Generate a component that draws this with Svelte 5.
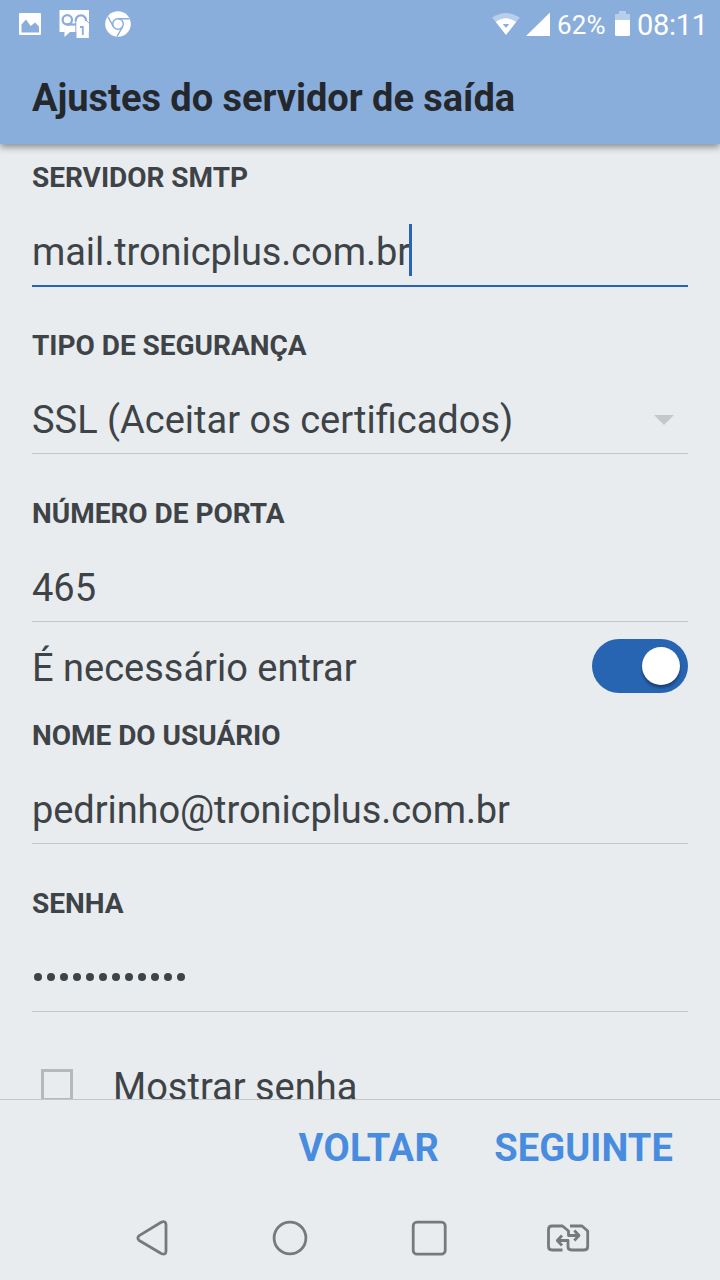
<script>
  const server = 'mail.tronicplus.com.br';
  const dots = Array(12).fill(0);
</script>

<div class="screen">
  <header>
    <div class="status">
      <svg class="notifications" width="150" height="48" viewBox="0 0 150 48">
        <path fill="#fff" fill-rule="evenodd" d="M20 13h20a1 1 0 0 1 1 1v20a1 1 0 0 1-1 1H20a1 1 0 0 1-1-1V14a1 1 0 0 1 1-1zM21.500 32.500H39V26.500L35 22.500L30.700 26L26 19.500L21.500 24.500z" />
        <path fill="#fff" d="M59.500 10H89V32H70L64.500 37V32H59.500z" />
        <g fill="none" stroke="#8aaedc" stroke-width="2.300">
          <circle cx="67.300" cy="19.800" r="4.700" />
          <path d="M67.300 24.500H76" />
          <path d="M75.800 21.500A5.200 5.200 0 1 1 86 21.500" />
        </g>
        <path fill="#fff" d="M76.300 21H86.500L88.800 23.500V38H76.300z" />
        <path fill="none" stroke="#8aaedc" stroke-width="1" d="M75.800 21V38M86.500 20.500L89.300 23.500" />
        <path fill="none" stroke="#8aaedc" stroke-width="1.800" d="M80 27H82.800V35" />
        <circle cx="118" cy="24" r="12.800" fill="#fff" />
        <g fill="none" stroke="#8aaedc" stroke-width="1.500">
          <circle cx="118" cy="24" r="5.300" />
          <path d="M118 18.700H129.500M113.400 26.600L108 17M122.600 26.600L117 36.500" />
        </g>
      </svg>
      <svg width="60" height="48" viewBox="0 0 60 48">
        <path fill="#b8cfeb" d="M2.200 17.500Q16 8.500 29.800 17.500L25.500 23H6.500z" />
        <path fill="#fff" fill-rule="evenodd" d="M5.800 22Q16 14.500 26.200 22L16 35zM12.800 24H19.200L16 28z" />
        <path fill="#fff" d="M60 12.500V36H36z" />
      </svg>
      <span class="percent">62%</span>
      <svg class="battery" width="16" height="48" viewBox="0 0 16 48">
        <path fill="#b8cfeb" d="M0 20V14H4V11H11V14H15V20z" />
        <path fill="#fff" d="M0 20H15V34.500Q15 36 13.500 36H1.500Q0 36 0 34.500z" />
      </svg>
      <span class="time">08:11</span>
    </div>
    <h1>Ajustes do servidor de saída</h1>
  </header>

  <main>
    <section class="field active">
      <div class="label">SERVIDOR SMTP</div>
      <div class="value"><span class="server">{server}</span><i class="caret"></i></div>
    </section>
    <section class="field">
      <div class="label">TIPO DE SEGURANÇA</div>
      <div class="value select">
        <span>SSL (Aceitar os certificados)</span>
        <svg width="20" height="10" viewBox="0 0 20 10"><path fill="#c5c8ca" d="M0 0H20L10 10z" /></svg>
      </div>
    </section>
    <section class="field">
      <div class="label">NÚMERO DE PORTA</div>
      <div class="value"><span>465</span></div>
    </section>
    <div class="login-row">
      <span>É necessário entrar</span>
      <div class="switch"><i></i></div>
    </div>
    <section class="field">
      <div class="label">NOME DO USUÁRIO</div>
      <div class="value"><span class="user">pedrinho@tronicplus.com.br</span></div>
    </section>
    <section class="field">
      <div class="label">SENHA</div>
      <div class="value password">{#each dots as _}<i></i>{/each}</div>
    </section>
    <div class="check-row">
      <i class="box"></i>
      <span>Mostrar senha</span>
    </div>
  </main>

  <footer>
    <span class="back">VOLTAR</span>
    <span>SEGUINTE</span>
  </footer>

  <nav>
    <svg width="720" height="84" viewBox="0 1196 720 84" fill="none" stroke="#777a7a" stroke-width="2.800" stroke-linejoin="round">
      <path d="M139.200 1235.600L161.200 1222.200Q166 1220.500 166 1225V1251Q166 1255.500 161.200 1253.500L139.200 1240.500Q136.500 1238 139.200 1235.600z" />
      <circle cx="290" cy="1238" r="15.900" />
      <rect x="413.200" y="1222.200" width="32" height="32" rx="3.800" />
      <path d="M562.500 1250H552Q548.500 1250 548.500 1246.500V1229.500Q548.500 1226 552 1226H562.500L568.500 1231V1235.500H578" />
      <path d="M574.300 1230.500L579 1235.500L574.300 1240.500" />
      <path d="M570 1226H582L587.700 1231V1246.500Q587.700 1250 584.200 1250H571.500Q568 1250 568 1246.500V1240.500H558" />
      <path d="M562 1235.500L557.300 1240.500L562 1245.500" />
    </svg>
  </nav>
</div>

<style>
  :global(body) { margin: 0; overflow: hidden; }
  .screen {
    width: 720px;
    height: 1280px;
    display: flex;
    flex-direction: column;
    overflow: hidden;
    background: #e8ecef;
    color: #3e4347;
    font: 38px/60px Roboto, sans-serif;
    white-space: nowrap;
  }
  svg { display: block; flex: none; }
  header {
    height: 144px;
    flex: none;
    background: #8aaedc;
    box-shadow: 0 3px 7px rgba(0, 0, 0, .42);
    z-index: 1;
  }
  .status { height: 48px; display: flex; color: #fff; }
  .notifications { margin-right: 340px; }
  .percent { width: 58px; margin: 0 0 0 7px; font-size: 26px; line-height: 50px; letter-spacing: .2px; }
  .battery { margin: 0 6px 0 0; }
  .time { font-size: 29px; line-height: 50px; letter-spacing: -.3px; }
  h1 {
    margin: 0;
    padding-left: 32px;
    color: #24282d;
    font-size: 38px;
    font-weight: 700;
    line-height: 100px;
    letter-spacing: -.03px;
  }
  main {
    height: 939px;
    flex: none;
    padding: 16px 32px 0;
    overflow: hidden;
  }
  .field { height: 126px; margin-bottom: 42px; display: flex; flex-direction: column; }
  .label { height: 34px; font-size: 28px; font-weight: 700; line-height: 36px; letter-spacing: -.02px; }
  .value {
    padding-top: 28px;
    box-sizing: border-box;
    flex: 1;
    display: flex;
    align-items: center;
    border-bottom: 1px solid #c1c6ca;
  }
  .value > span { height: 63px; line-height: 60px; }
  .value .server, .value .user { letter-spacing: -.07px; }
  .active { height: 127px; margin-bottom: 41px; }
  .active .value { border-bottom: 2px solid #2765b3; }
  .caret { width: 3px; height: 52px; margin: -7px 0 0 -1px; background: #2765b3; }
  .select { justify-content: space-between; }
  .select svg { margin: 0 14px 3px 0; }
  .login-row {
    height: 96px;
    margin-top: -42px;
    display: flex;
    justify-content: space-between;
    line-height: 92px;
  }
  .switch {
    width: 96px;
    height: 54px;
    margin-top: 17px;
    box-sizing: border-box;
    padding: 8px;
    display: flex;
    justify-content: flex-end;
    border-radius: 27px;
    background: #2765b3;
  }
  .switch i { width: 38px; height: 38px; border-radius: 50%; background: #fff; box-shadow: 0 3px 3px rgba(0, 0, 0, .35); }
  .password { gap: 4.700px; padding: 23px 0 0 2px; }
  .password i { width: 8.300px; height: 8.300px; border-radius: 50%; background: #3e4347; }
  .check-row { display: flex; margin: 57px 0 0 9px; }
  .box { width: 32px; height: 32px; box-sizing: border-box; border: 3px solid #b5b9bb; }
  .check-row span { margin: -12px 0 0 40px; }
  footer {
    height: 97px;
    box-sizing: border-box;
    flex: none;
    padding-right: 47px;
    display: flex;
    justify-content: flex-end;
    gap: 55px;
    border-top: 1px solid #c1c6ca;
    color: #488ce0;
    font-weight: 700;
    line-height: 96px;
    letter-spacing: .1px;
  }
  .back { letter-spacing: .35px; }
  nav { height: 84px; flex: none; }
</style>
